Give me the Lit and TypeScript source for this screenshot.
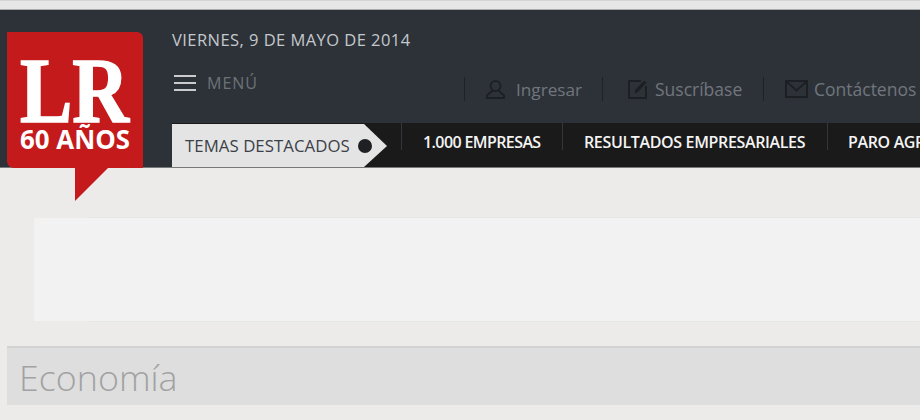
import { LitElement, html, css } from "lit";
import { customElement } from "lit/decorators.js";

@customElement("app-root")
export class AppRoot extends LitElement {
  static styles = css`
    :host { display: block; width: 920px; height: 420px; overflow: hidden; background: #ecebe9; font-family: "Open Sans", "Liberation Sans", sans-serif; }
    .top { height: 10px; box-sizing: border-box; background: #e6e6e6; border-top: 1px solid #d4d4d4; border-bottom: 1px solid #a9abad; }
    header { position: relative; height: 158px; box-sizing: border-box; padding-left: 172px; background: #2d3239; border-bottom: 1px solid #77787a; display: flex; flex-direction: column; }
    .logo { position: absolute; left: 7px; top: 22px; z-index: 2; display: block; }
    .date { margin-top: 20px; height: 20px; font-size: 16.5px; line-height: 20px; color: #c4c8cc; white-space: nowrap; letter-spacing: 0.45px; }
    .mid { position: relative; height: 73px; }
    .menu { position: absolute; left: 2px; top: 23px; display: flex; align-items: center; gap: 11px; color: #6d7278; font-size: 16px; letter-spacing: 1px; line-height: 20px; }
    .burger { width: 22px; display: flex; flex-direction: column; gap: 5px; }
    .burger i { display: block; height: 2px; background: #c9cbcd; }
    .links { position: absolute; left: 292px; top: 27px; display: flex; align-items: center; height: 24px; color: #71767c; font-size: 17px; white-space: nowrap; }
    .sep { width: 1px; height: 24px; background: #1e2227; }
    .link { display: flex; align-items: center; }
    .link svg { display: block; flex: none; }
    .l1 { margin-left: 21px; gap: 11px; width: 116px; font-size: 17.200px; }
    .l2 { margin-left: 25px; gap: 8px; width: 135px; font-size: 17.500px; }
    .l3 { margin-left: 21px; gap: 6px; font-size: 17.500px; }
    nav { flex: 1; display: flex; align-items: flex-start; background: #1a1a1a; color: #f4f4f4; font-size: 16px; font-weight: 600; letter-spacing: -0.35px; white-space: nowrap; }
    .tag { position: relative; width: 215px; height: 43px; margin-top: 1px; flex: none; box-sizing: border-box; padding: 12px 0 0 13px; font-size: 16.800px; font-weight: 400; letter-spacing: 0.05px; line-height: 20px; color: #3b4148; background: #e4e4e4; clip-path: polygon(0 0, 192px 0, 215px 22px, 192px 43px, 0 43px); }
    .dot { position: absolute; left: 186px; top: 15px; width: 14px; height: 14px; border-radius: 50%; background: #1e2023; }
    .nsep { flex: none; width: 1px; height: 27px; background: #33373d; }
    .first { margin-left: 14px; }
    .item { flex: none; height: 40px; line-height: 39px; padding-left: 21px; box-sizing: border-box; }
    .i1 { width: 160px; letter-spacing: -0.6px; }
    .i2 { width: 264px; }
    .i3 { padding-left: 20px; }
    main { padding: 49px 0 0 0; }
    .rule { height: 1px; margin-left: 88px; background: #e6e6e4; }
    .panel { margin-left: 34px; height: 103px; background: #f2f2f2; }
    .title { margin: 24px 0 0 7px; height: 59px; box-sizing: border-box; background: #dedede; border-top: 2px solid #d2d2d2; padding-left: 12px; font-size: 35.800px; line-height: 58px; color: #a2a2a2; font-weight: 300; }
  `;

  render() {
    return html`
      <div class="top"></div>
      <header>
        <svg class="logo" width="136" height="170" viewBox="0 0 136 170" style="font-family:'Liberation Serif',serif">
          <path d="M7 0H130a6 6 0 0 1 6 6V136H101L68 169V136H7a7 7 0 0 1-7-7V0Z" fill="#c51a1b"/>
          <text x="13" y="90" font-size="94" font-weight="700" fill="#fff" stroke="#fff" stroke-width="1.600" textLength="109" lengthAdjust="spacingAndGlyphs">LR</text>
          <text x="68" y="117" text-anchor="middle" font-size="26" font-weight="700" fill="#fff" textLength="110" lengthAdjust="spacingAndGlyphs" style="font-family:'Open Sans',sans-serif">60 AÑOS</text>
        </svg>
        <div class="date">VIERNES, 9 DE MAYO DE 2014</div>
        <div class="mid">
          <div class="menu"><span class="burger"><i></i><i></i><i></i></span><span>MENÚ</span></div>
          <div class="links">
            <span class="sep"></span>
            <span class="link l1">
              <svg width="19" height="19" viewBox="0 0 19 19" fill="none" stroke="#1c2025" stroke-width="2"><circle cx="9.500" cy="6" r="5"/><path d="M6.500 10.500L1 15.500V18H18V15.500L12.500 10.500"/></svg>
              <span>Ingresar</span>
            </span>
            <span class="sep"></span>
            <span class="link l2">
              <svg width="19" height="19" viewBox="0 0 19 19" fill="none" stroke="#1c2025" stroke-width="2"><path d="M13 1H1V18H18V6"/><path d="M7 13L8 9.500L16.500 1L18 2.500L9.500 12Z" fill="#1c2025" stroke-width="1"/></svg>
              <span>Suscríbase</span>
            </span>
            <span class="sep"></span>
            <span class="link l3">
              <svg width="23" height="18" viewBox="0 0 23 18" fill="none" stroke="#1c2025" stroke-width="2"><rect x="1" y="1" width="21" height="16"/><path d="M2 2L11.500 10.500L21 2"/></svg>
              <span>Contáctenos</span>
            </span>
          </div>
        </div>
        <nav>
          <div class="tag">TEMAS DESTACADOS<span class="dot"></span></div>
          <span class="nsep first"></span>
          <div class="item i1">1.000 EMPRESAS</div>
          <span class="nsep"></span>
          <div class="item i2">RESULTADOS EMPRESARIALES</div>
          <span class="nsep"></span>
          <div class="item i3">PARO AGRARIO</div>
        </nav>
      </header>
      <main>
        <div class="rule"></div>
        <div class="panel"></div>
        <div class="rule"></div>
        <div class="title">Economía</div>
      </main>
    `;
  }
}
